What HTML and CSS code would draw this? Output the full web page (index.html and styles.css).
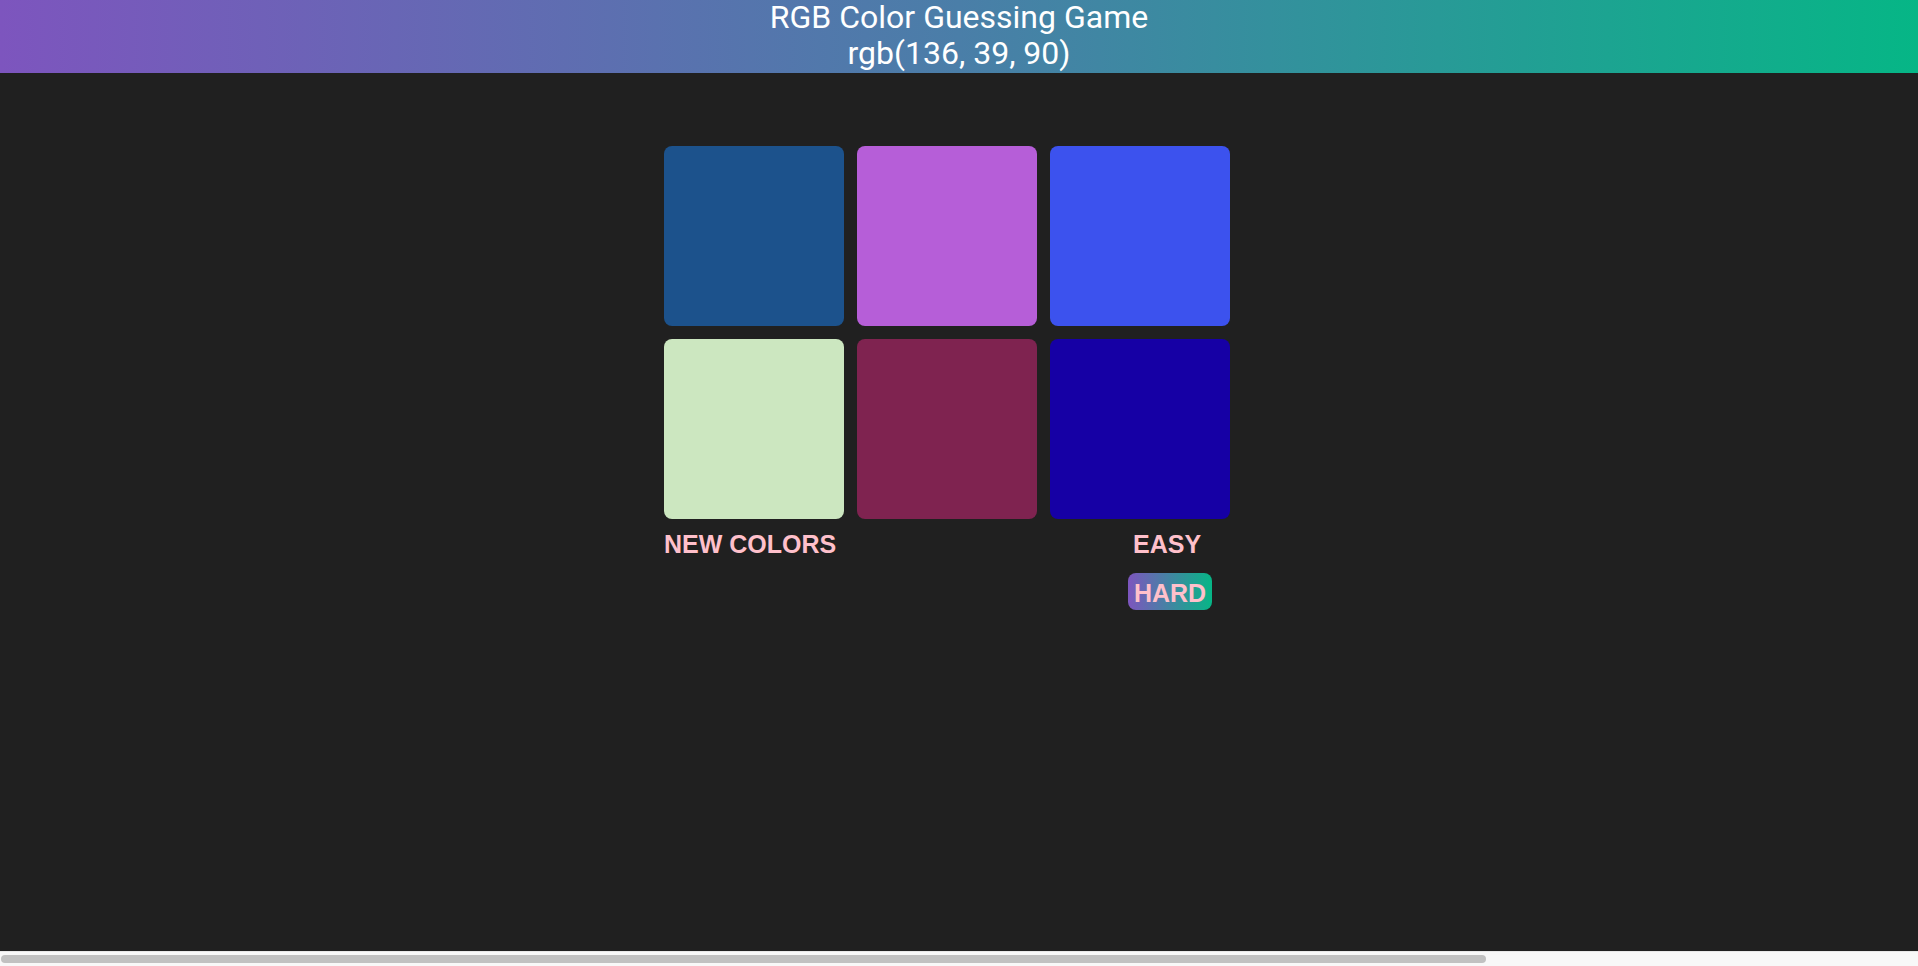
FILE: index.html
```html
<!DOCTYPE html>
<html lang="en">
<head>
<meta charset="utf-8">
<title>RGB Color Guessing Game</title>
<link rel="stylesheet" href="styles.css">
</head>
<body>
<header class="banner">
  <h1 class="title">RGB Color Guessing Game<span class="target">rgb(136, 39, 90)</span></h1>
</header>
<main class="game">
  <div class="board">
    <div class="square sq1"></div>
    <div class="square sq2"></div>
    <div class="square sq3"></div>
    <div class="square sq4"></div>
    <div class="square sq5"></div>
    <div class="square sq6"></div>
  </div>
  <div class="controls">
    <button class="btn reset">New Colors</button>
    <span class="message"></span>
    <div class="modes">
      <button class="btn mode easy">Easy</button>
      <button class="btn mode selected">Hard</button>
    </div>
  </div>
</main>
<div class="hscroll"><div class="hscroll-thumb"></div></div>
</body>
</html>
```
FILE: styles.css
```css
html, body {
  margin: 0;
  padding: 0;
}
body {
  background: #202020;
  font-family: Roboto, "Liberation Sans", sans-serif;
}
.banner {
  background: linear-gradient(to right, #7d55be, #4a7ea8 50%, #06b686);
  color: #fff;
  text-align: center;
  height: 73px;
}
.title {
  margin: 0;
  font-weight: 400;
  font-size: 32px;
  line-height: 35px;
}
.target {
  display: block;
  line-height: 36px;
}
.game {
  display: flex;
  flex-direction: column;
  width: 567px;
  margin: 73px auto 0;
  padding-left: 1px;
  padding-right: 24px;
}
.board {
  display: grid;
  grid-template-columns: repeat(3, 180px);
  grid-auto-rows: 180px;
  gap: 13px;
}
.square {
  border-radius: 8px;
}
.sq1 { background: #1c528c; }
.sq2 { background: #b65ed8; }
.sq3 { background: #3c52ee; }
.sq4 { background: #cce7c0; }
.sq5 { background: #7f2350; }
.sq6 { background: #1600a5; }
.controls {
  display: flex;
  justify-content: space-between;
  align-items: flex-start;
  margin-top: 5px;
  padding-right: 19px;
}
.btn {
  font-family: "Liberation Sans", Arial, sans-serif;
  font-weight: 700;
  font-size: 25px;
  text-transform: uppercase;
  color: #ffc0cb;
  background: none;
  border: none;
  border-radius: 8px;
  box-sizing: border-box;
  height: 37px;
  padding: 3px 7px 0 8px;
  line-height: 34px;
}
.reset {
  padding-left: 0;
}
.modes {
  display: flex;
  flex-direction: column;
  gap: 12px;
  width: 84px;
}
.mode {
  width: 84px;
  padding-left: 0;
  padding-right: 0;
  text-align: center;
}
.easy {
  text-align: left;
  padding-left: 5px;
}
.selected {
  background: linear-gradient(to right, #7d55be, #06b686);
}
.hscroll {
  position: fixed;
  left: 0;
  right: 0;
  bottom: 0;
  height: 15px;
  background: #f8f8f8;
  border-top: 1px solid #e8e8e8;
  box-sizing: border-box;
  padding: 3px 0 0 1px;
}
.hscroll-thumb {
  width: 1485px;
  height: 8px;
  border-radius: 4px;
  background: #c1c1c1;
}
```
